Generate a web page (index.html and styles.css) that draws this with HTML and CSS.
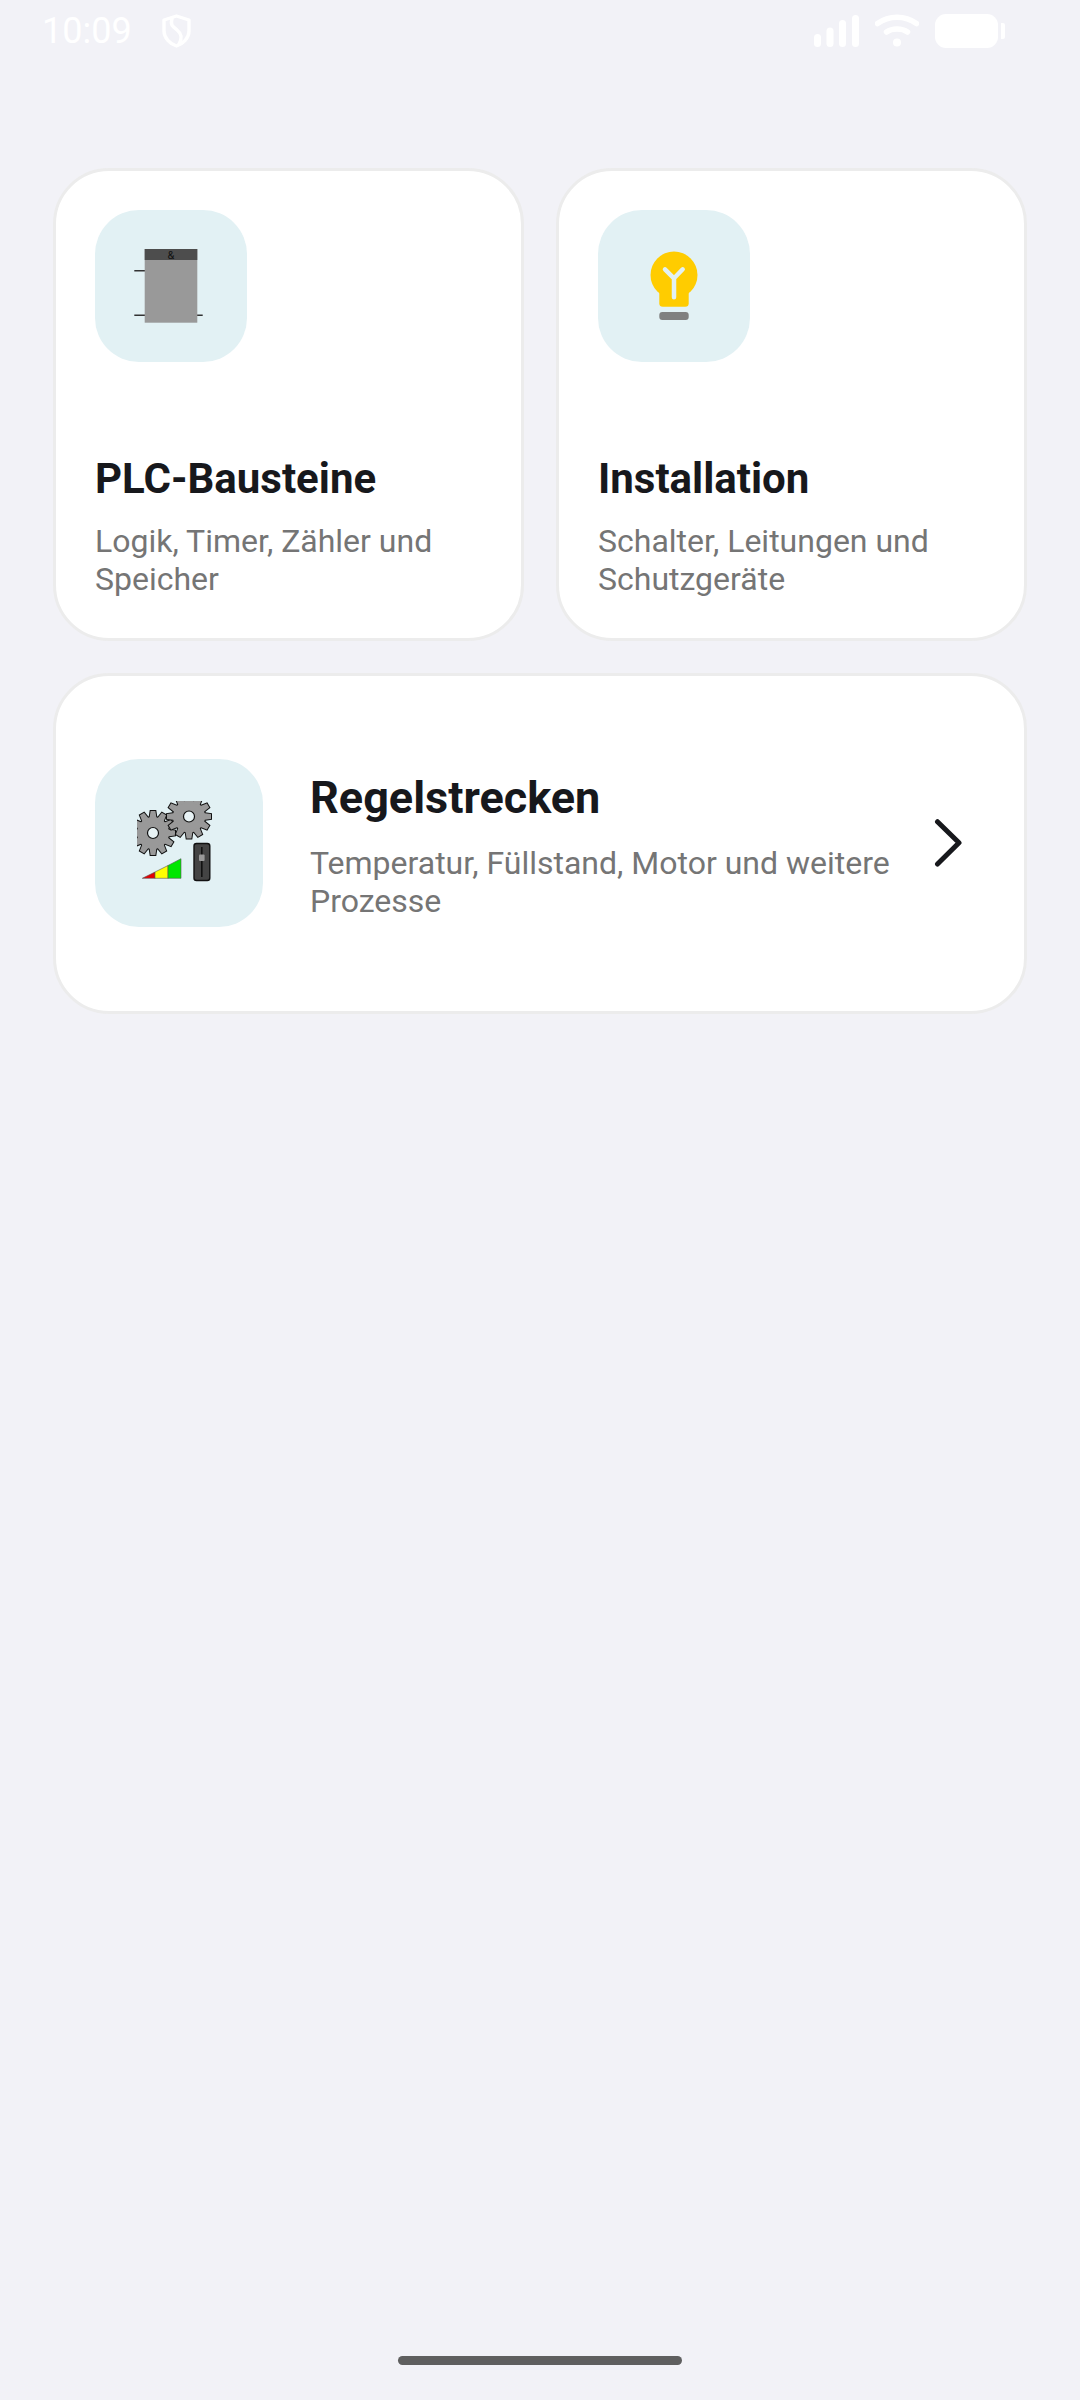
FILE: index.html
```html
<!DOCTYPE html>
<html lang="de">
<head>
    <meta charset="UTF-8">
    <meta name="viewport" content="width=device-width, initial-scale=1.0">
    <title>Regelstrecken</title>
    <link rel="stylesheet" href="styles.css">
</head>
<body>
    <div class="page">
        <div class="status-bar">
            <div class="status-left">
                <span class="time">10:09</span>
                <svg class="shield" width="29" height="34" viewBox="0 0 29 34" fill="none" stroke="#fff" stroke-width="3.4" stroke-linecap="round" stroke-linejoin="round">
                    <path d="M14.5 2 L27 6 V17 C27 24 21 30 14.5 32 C8 30 2 24 2 17 V6 Z"/>
                    <path d="M10 5 C8 11 11 13 15 16 C20 20 20 25 17 30"/>
                </svg>
            </div>
            <div class="status-right">
                <svg width="48" height="34" viewBox="0 0 48 34" fill="#fff">
                    <rect x="0" y="20" width="7" height="13" rx="3.5"/>
                    <rect x="12.5" y="13.5" width="7" height="19.5" rx="3.5"/>
                    <rect x="25" y="6" width="7" height="27" rx="3.5"/>
                    <rect x="38" y="1" width="7" height="32" rx="3.5"/>
                </svg>
                <svg width="44" height="34" viewBox="0 0 44 34" fill="none" stroke="#fff" stroke-width="5.5" stroke-linecap="round">
                    <path d="M2.5 9.5 C14 1 30 1 41.5 9.5"/>
                    <path d="M11.5 18 C17 14 27 14 32.5 18"/>
                    <circle cx="22" cy="28.5" r="4" fill="#fff" stroke="none"/>
                </svg>
                <div class="battery"><div class="battery-tip"></div></div>
            </div>
        </div>

        <div class="main">
            <div class="card">
                <div class="icon-box">
                    <svg width="84" height="84" viewBox="0 0 84 84">
                        <path d="M5.3 26.7 H16 M5.3 71.3 H16 M68 71.3 H73.7" stroke="#333" stroke-width="1.4"/>
                        <rect x="15.7" y="5" width="52.6" height="73.7" fill="#999"/>
                        <rect x="15.7" y="5" width="52.6" height="11" fill="#4d4d4d"/>
                        <text x="42" y="14.5" font-family="Roboto, sans-serif" font-size="11" text-anchor="middle" fill="#111">&amp;</text>
                    </svg>
                </div>
                <div class="card-title">PLC-Bausteine</div>
                <div class="card-sub">Logik, Timer, Zähler und Speicher</div>
            </div>

            <div class="card">
                <div class="icon-box">
                    <svg width="84" height="84" viewBox="0 0 84 84">
                        <circle cx="42" cy="31" r="23.5" fill="#ffcc00"/>
                        <rect x="27.3" y="44" width="29.4" height="18.7" rx="3.5" fill="#ffcc00"/>
                        <rect x="27.3" y="68" width="29.4" height="8" rx="3" fill="#808080"/>
                        <path d="M33 25.3 L42 34.3 L50.7 25.3 M42 34.3 V53.3" fill="none" stroke="#e2f1f4" stroke-width="4.5" stroke-linecap="round" stroke-linejoin="round"/>
                    </svg>
                </div>
                <div class="card-title">Installation</div>
                <div class="card-sub">Schalter, Leitungen und Schutzgeräte</div>
            </div>

            <div class="card card-wide">
                <div class="icon-box icon-box-big">
                    <svg width="84" height="84" viewBox="0 0 84 84">
                        <defs>
                            <path id="tooth" d="M-3.6 -14 L-2.4 -22 H2.4 L3.6 -14 Z"/>
                            <g id="gear">
                                <circle r="16"/>
                                <use href="#tooth"/>
                                <use href="#tooth" transform="rotate(30)"/>
                                <use href="#tooth" transform="rotate(60)"/>
                                <use href="#tooth" transform="rotate(90)"/>
                                <use href="#tooth" transform="rotate(120)"/>
                                <use href="#tooth" transform="rotate(150)"/>
                                <use href="#tooth" transform="rotate(180)"/>
                                <use href="#tooth" transform="rotate(210)"/>
                                <use href="#tooth" transform="rotate(240)"/>
                                <use href="#tooth" transform="rotate(270)"/>
                                <use href="#tooth" transform="rotate(300)"/>
                                <use href="#tooth" transform="rotate(330)"/>
                            </g>
                        </defs>
                        <use href="#gear" x="16" y="32" fill="#111" stroke="#111" stroke-width="2"/>
                        <use href="#gear" x="16" y="32" fill="#999"/>
                        <circle cx="16" cy="32" r="5.5" fill="#e8f3f5" stroke="#111" stroke-width="1.2"/>
                        <use href="#gear" x="52" y="15.5" fill="#111" stroke="#111" stroke-width="2"/>
                        <use href="#gear" x="52" y="15.5" fill="#999"/>
                        <circle cx="52" cy="15.5" r="5.5" fill="#e8f3f5" stroke="#111" stroke-width="1.2"/>
                        <path d="M5.3 77.3 L18 71 V77.3 Z" fill="#e60000" stroke="#555" stroke-width="0.6"/>
                        <path d="M18 71 L31 64.5 V77.3 H18 Z" fill="#ffff00" stroke="#555" stroke-width="0.6"/>
                        <path d="M31 64.5 L44 57.7 V77.3 H31 Z" fill="#00e600" stroke="#555" stroke-width="0.6"/>
                        <rect x="57" y="42.5" width="15.8" height="37" rx="2.5" fill="#444" stroke="#111" stroke-width="1.4"/>
                        <path d="M64.8 46 V76" stroke="#111" stroke-width="1.6"/>
                        <rect x="62" y="53.5" width="5.6" height="6.5" rx="1" fill="#999"/>
                    </svg>
                </div>
                <div class="wide-text">
                    <div class="card-title">Regelstrecken</div>
                    <div class="card-sub">Temperatur, Füllstand, Motor und weitere Prozesse</div>
                </div>
                <svg class="chevron" width="48" height="48" viewBox="0 0 48 48" fill="none" stroke="#17181c" stroke-width="5" stroke-linecap="round" stroke-linejoin="round">
                    <path d="M13.5 2.7 L35 23.8 L13.5 45"/>
                </svg>
            </div>
        </div>

        <div class="home-bar"></div>
    </div>
</body>
</html>
```

FILE: styles.css
```css
* {
    box-sizing: border-box;
}

body {
    margin: 0;
    font-family: Roboto, sans-serif;
    background-color: #f2f2f7;
}

.page {
    height: 2400px;
    display: flex;
    flex-direction: column;
    overflow: hidden;
}

.status-bar {
    height: 60px;
    padding: 14px 75px 0 42px;
    display: flex;
    justify-content: space-between;
    align-items: flex-start;
    flex-shrink: 0;
}

.status-left {
    display: flex;
    align-items: center;
    gap: 30px;
}

.time {
    color: #fff;
    font-size: 36px;
    line-height: 34px;
}

.status-right {
    display: flex;
    align-items: center;
    gap: 13px;
}

.status-right svg + svg {
    margin-right: 3px;
}

.battery {
    position: relative;
    width: 63px;
    height: 34px;
    margin-right: 7px;
    background: #fff;
    border-radius: 11px;
}

.battery-tip {
    position: absolute;
    left: 66px;
    top: 9px;
    width: 4px;
    height: 16px;
    background: #fff;
    border-radius: 0 2px 2px 0;
}

.main {
    flex: 1;
    padding: 108px 53px 0;
    display: grid;
    grid-template-columns: 1fr 1fr;
    grid-auto-rows: min-content;
    column-gap: 32px;
    row-gap: 32px;
}

.card {
    background: #fff;
    border: 3px solid #ececec;
    border-radius: 56px;
    padding: 39px 38px 40px 39px;
}

.icon-box {
    width: 152px;
    height: 152px;
    background: #e2f1f4;
    border-radius: 44px;
    display: flex;
    align-items: center;
    justify-content: center;
}

.card-title {
    margin-top: 92px;
    font-size: 42px;
    font-weight: 700;
    line-height: 50px;
    color: #17181c;
}

.card-sub {
    margin-top: 18px;
    font-size: 32px;
    line-height: 38px;
    color: #757575;
}

.card-wide {
    grid-column: 1 / 3;
    display: flex;
    align-items: center;
    padding: 83px 52px 84px 39px;
}

.icon-box-big {
    width: 168px;
    height: 168px;
    flex-shrink: 0;
}

.wide-text {
    flex: 1;
    margin-left: 47px;
    margin-right: 30px;
    padding-top: 5px;
}

.wide-text .card-title {
    margin-top: 0;
    font-size: 45px;
    line-height: 54px;
}

.wide-text .card-sub {
    margin-top: 19px;
}

.chevron {
    flex-shrink: 0;
}

.home-bar {
    width: 284px;
    height: 9px;
    margin: 0 auto 35px;
    background: #5f5f5f;
    border-radius: 5px;
    flex-shrink: 0;
}
```
